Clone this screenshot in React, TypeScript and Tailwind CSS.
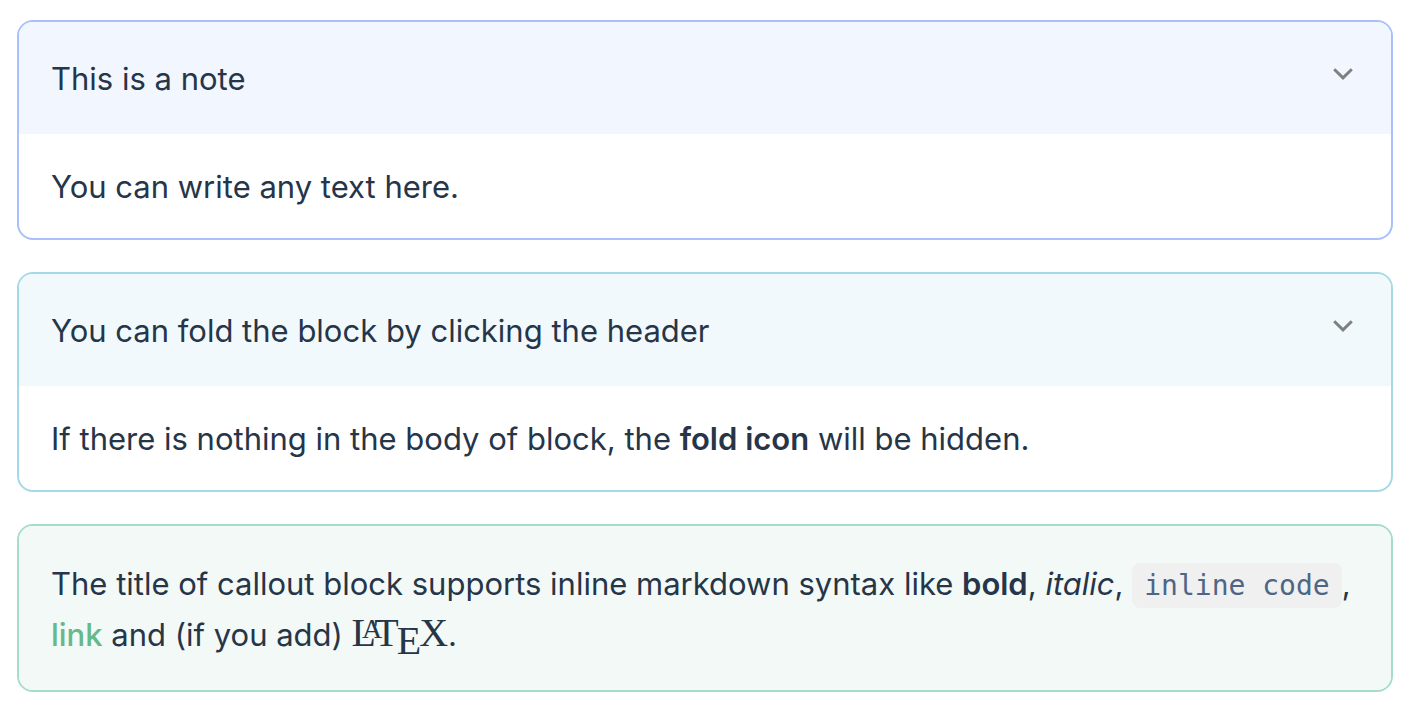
import { useState, type ReactNode } from "react";

const tones = {
  blue: { box: "border-[#a8c1fb]", head: "bg-[#f2f6ff]" },
  cyan: { box: "border-[#a5d9e6]", head: "bg-[#f1f9fc]" },
  green: { box: "border-[#a5dccd]", head: "bg-[#f2f9f7]" },
};

type CalloutProps = {
  tone: keyof typeof tones;
  title: ReactNode;
  children?: ReactNode;
};

function Callout({ tone, title, children }: CalloutProps) {
  const [open, setOpen] = useState(true);
  const { box, head } = tones[tone];
  return (
    <section className={`overflow-hidden rounded-2xl border-2 ${box}`}>
      {children ? (
        <button
          type="button"
          aria-expanded={open}
          onClick={() => setOpen(!open)}
          className={`flex w-full items-start justify-between px-8 pt-[31px] pb-[30px] text-left ${head}`}
        >
          <span>{title}</span>
          <svg
            className={`mt-[9px] mr-1 h-6 w-6 shrink-0 ${open ? "" : "-rotate-90"}`}
            viewBox="0 0 24 24"
            fill="none"
            stroke="#808080"
            strokeWidth="3"
            strokeLinecap="butt"
            strokeLinejoin="miter"
            aria-hidden="true"
          >
            <path d="M3.2 7.2L12 15.8L20.8 7.2" />
          </svg>
        </button>
      ) : (
        <div className={`px-8 pt-8 pb-[30px] ${head}`}>{title}</div>
      )}
      {children && open ? <div className="px-8 pt-[27px] pb-[26px]">{children}</div> : null}
    </section>
  );
}

function Latex() {
  return (
    <span className="inline-flex items-baseline font-['Liberation_Serif',serif] text-[40px] leading-none">
      <span>L</span>
      <span className="-mt-3 -ml-3.5 -translate-y-2 text-[28px]">A</span>
      <span className="-ml-2">T</span>
      <span className="-ml-0.5 translate-y-2">E</span>
      <span className="-ml-0.5">X</span>
    </span>
  );
}

export default function App() {
  return (
    <main className="flex flex-col gap-8 py-5 pr-[27px] pl-[17px] font-['Inter',sans-serif] text-[31px] leading-[51px] text-[#263548]">
      <Callout tone="blue" title="This is a note">
        <p>You can write any text here.</p>
      </Callout>
      <Callout tone="cyan" title="You can fold the block by clicking the header">
        <p>
          If there is nothing in the body of block, the <strong className="font-semibold">fold icon</strong> will be hidden.
        </p>
      </Callout>
      <Callout
        tone="green"
        title={
          <p>
            The title of callout block supports inline markdown syntax like{" "}
            <strong className="font-semibold">bold</strong>, <em>italic</em>,{" "}
            <code className="rounded-lg bg-[#f0f0f0] px-3 py-1.5 font-['DejaVu_Sans_Mono',monospace] text-[28px] leading-none text-[#4d6685]">
              inline code
            </code>
            ,{" "}
            <a href="#link" className="font-medium text-[#67b88a]">
              link
            </a>{" "}
            and (if you add) <Latex />.
          </p>
        }
      />
    </main>
  );
}
